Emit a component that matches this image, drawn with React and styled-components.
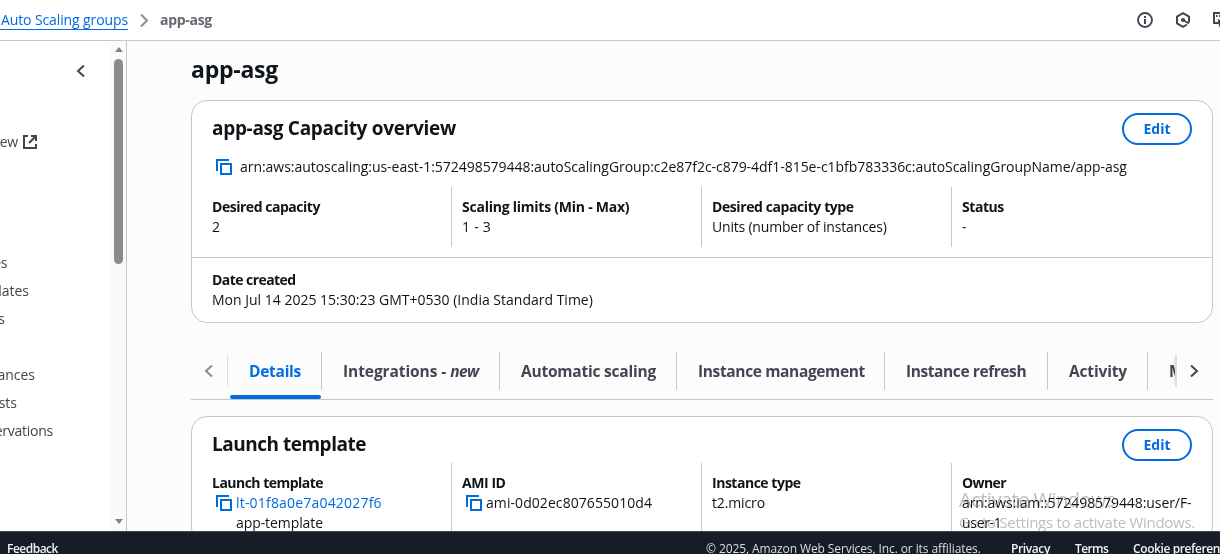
import React from "react";
import styled, { createGlobalStyle, css } from "styled-components";

const color = {
  text: "#0f141a",
  muted: "#424650",
  soft: "#656871",
  faint: "#8c8c94",
  line: "#c6c6cd",
  link: "#006ce0",
  page: "#fcfcfd",
  footer: "#161d26",
};

const GlobalStyle = createGlobalStyle`
  * { box-sizing: border-box; }
  body {
    margin: 0;
    overflow: hidden;
    background: ${color.page};
    color: ${color.text};
    font: 400 14px/20px "Open Sans", "Noto Sans", sans-serif;
    font-variant-ligatures: none;
  }
`;

const Text = styled.span`
  white-space: nowrap;
  letter-spacing: ${(p) => p.$track || 0}px;
`;

const Shell = styled.div`
  position: relative;
  display: flex;
  flex-direction: column;
  width: 1220px;
  height: 554px;
  overflow: hidden;
`;

/* ---------- top bar ---------- */
const TopBar = styled.header`
  flex: none;
  display: flex;
  align-items: center;
  height: 41px;
  background: #fff;
  border-bottom: 1px solid ${color.line};
  overflow: hidden;
`;
const CrumbLink = styled(Text)`
  display: block;
  width: 128px;
  height: 20px;
  padding-left: 1px;
  line-height: 19px;
  color: ${color.link};
  border-bottom: 1px solid ${color.link};
`;
const CrumbIcon = styled.div`
  display: flex;
  width: 32px;
  padding-left: 11px;
`;
const CrumbCurrent = styled(Text)`
  color: ${color.soft};
  font-weight: 700;
`;
const TopIcons = styled.div`
  display: flex;
  gap: 22px;
  margin-left: auto;
  margin-right: -9px;
  color: ${color.muted};
`;

/* ---------- sidebar ---------- */
const Body = styled.div`
  flex: 1;
  min-height: 0;
  display: flex;
`;
const Sidebar = styled.aside`
  flex: none;
  display: flex;
  width: 127px;
  background: #fff;
  border-right: 1px solid ${color.line};
`;
const SideContent = styled.nav`
  width: 111px;
  color: ${color.muted};
`;
const Collapse = styled.div`
  display: flex;
  justify-content: flex-end;
  padding: 23px 25px 0 0;
  height: 87px;
`;
const SideItem = styled.div`
  display: flex;
  justify-content: flex-end;
  width: ${(p) => p.$end}px;
  height: 28px;
  padding: 4px 0;
  white-space: nowrap;
`;
const ExternalRow = styled.div`
  display: flex;
  align-items: center;
  gap: 5px;
  height: 28px;
  margin-bottom: 93px;
`;
const SideGap = styled.div`
  height: 28px;
`;
const Scrollbar = styled.div`
  display: flex;
  flex-direction: column;
  align-items: center;
  width: 15px;
  padding: 6px 0 7px;
  background: #fafafa;
`;
const Arrow = styled.div`
  border: 4.5px solid transparent;
  border-top-width: ${(p) => (p.$up ? 0 : 5)}px;
  border-bottom-width: ${(p) => (p.$up ? 5 : 0)}px;
  border-${(p) => (p.$up ? "bottom" : "top")}-color: #858585;
  ${(p) => !p.$up && css`margin-top: auto;`}
`;
const Thumb = styled.div`
  width: 9px;
  height: 205px;
  margin-top: 7px;
  border-radius: 5px;
  background: #8b8b8b;
`;

/* ---------- main ---------- */
const Main = styled.main`
  flex: 1;
  min-width: 0;
  padding: 12px 7px 0 64px;
  overflow: hidden;
`;
const PageTitle = styled.h1`
  margin: 0 0 15px;
  font-size: 23px;
  line-height: 32px;
  font-weight: 700;
  letter-spacing: -0.25px;
`;
const Card = styled.section`
  background: #fff;
  border: 1px solid ${color.line};
  border-radius: 16px;
`;
const CardHead = styled.div`
  display: flex;
  justify-content: space-between;
  padding: 12px 20px 0;
`;
const CardTitle = styled.h2`
  margin: 0;
  padding-top: 3px;
  font-size: 19px;
  line-height: 24px;
  font-weight: 700;
  letter-spacing: ${(p) => p.$track}px;
`;
const Button = styled.button`
  width: 70px;
  height: 32px;
  padding: 0;
  border: 2px solid ${color.link};
  border-radius: 20px;
  background: #fff;
  color: ${color.link};
  font: 700 14px/20px "Open Sans", sans-serif;
`;
const CopyRow = styled.div`
  display: flex;
  align-items: center;
  gap: ${(p) => p.$gap || 4}px;
  padding-left: 4px;
  height: 20px;
`;
const ArnRow = styled.div`
  padding: 12px 20px 10px;
`;
const Columns = styled.div`
  display: grid;
  grid-template-columns: 249px 250px 250px 1fr;
  padding: 0 11px 0 10px;
  margin-top: ${(p) => p.$top || 0}px;
`;
const Column = styled.div`
  min-height: 60px;
  padding: 10px 0 10px 10px;
  & + & { border-left: 1px solid ${color.line}; }
`;
const Label = styled(Text)`
  display: block;
  font-weight: 700;
`;
const Value = styled(Text)`
  display: block;
  color: ${(p) => (p.$link ? color.link : "inherit")};
`;
const Indented = styled.div`
  padding-left: 24px;
`;
const CardFoot = styled.div`
  margin-top: 10px;
  padding: 12px 20px;
  border-top: 1px solid ${color.line};
`;

/* ---------- tabs ---------- */
const TabBar = styled.div`
  display: flex;
  height: 48px;
  margin: 29px 0 16px;
  border-bottom: 1px solid ${color.line};
`;
const ScrollLeft = styled.div`
  flex: none;
  display: flex;
  justify-content: center;
  align-items: center;
  width: 37px;
  height: 32px;
  margin-top: 3px;
  border-right: 1px solid #e0e0e5;
  color: ${color.faint};
`;
const ScrollRight = styled(ScrollLeft)`
  width: 38px;
  padding-right: 3px;
  border-right: 0;
  border-left: 2px solid #dcdce2;
  box-shadow: -3px 0 5px -3px rgba(15, 20, 26, 0.12);
  background: ${color.page};
  color: ${color.muted};
`;
const TabList = styled.div`
  flex: 1;
  min-width: 0;
  display: flex;
  overflow: hidden;
`;
const Tab = styled.div`
  flex: none;
  display: flex;
  flex-direction: column;
  width: ${(p) => p.$w}px;
  color: ${(p) => (p.$active ? color.link : color.muted)};
  &::after {
    content: "";
    display: ${(p) => (p.$active ? "block" : "none")};
    height: 4px;
    margin: 5px 1px 0 2px;
    border-radius: 2px;
    background: ${color.link};
  }
`;
const TabLabel = styled(Text)`
  height: 38px;
  padding: 8px 0 0 21px;
  border-right: 1px solid ${color.line};
  font-size: 15.5px;
  line-height: 22px;
  font-weight: 700;
`;
const Em = styled.em`
  letter-spacing: -0.6px;
`;

/* ---------- footer ---------- */
const Footer = styled.footer`
  flex: none;
  display: flex;
  align-items: flex-start;
  height: 23px;
  padding: 8px 0 0 7px;
  border-top: 1px solid ${color.muted};
  background: ${color.footer};
  color: #f3f3f7;
  font-size: 12px;
  line-height: 18px;
  font-weight: 600;
  overflow: hidden;
`;
const FooterItem = styled(Text)`
  flex: none;
  width: ${(p) => p.$w}px;
`;
const Copyright = styled(FooterItem)`
  margin-left: 648px;
  color: #dedee3;
  font-weight: 400;
`;

const Watermark = styled.div`
  position: absolute;
  left: 959px;
  top: 486px;
  height: 45px;
  overflow: hidden;
  color: #bdbdbd;
  mix-blend-mode: darken;
  pointer-events: none;
`;
const WatermarkTitle = styled(Text)`
  display: block;
  font-size: 20px;
  line-height: 28px;
`;
const WatermarkText = styled(Text)`
  display: block;
  font-size: 15px;
  line-height: 17px;
`;

const Chevron = ({ w = 8, h = 12, right, stroke = "currentColor" }) => (
  <svg width={w + 2} height={h + 2} viewBox={`-1 -1 ${w + 2} ${h + 2}`} fill="none" stroke={stroke} strokeWidth="2">
    <path d={right ? `M1 0.5L${w - 1} ${h / 2}L1 ${h - 0.5}` : `M${w - 1} 0.5L1 ${h / 2}L${w - 1} ${h - 0.5}`} />
  </svg>
);
const CopyIcon = () => (
  <svg width="16" height="16" viewBox="0 0 16 16" fill="none" stroke={color.link} strokeWidth="2">
    <path d="M1 12V1h12" />
    <path d="M5 5h10v10H5z" />
  </svg>
);
const ExternalIcon = () => (
  <svg width="14" height="14" viewBox="0 0 14 14" fill="none" stroke="currentColor" strokeWidth="2">
    <path d="M5 1H1v12h12V9" />
    <path d="M8 1h5v5M13 1L6 8" />
  </svg>
);
const InfoIcon = () => (
  <svg width="16" height="16" viewBox="0 0 16 16" fill="none" stroke="currentColor" strokeWidth="1.9">
    <circle cx="8" cy="8" r="7" />
    <path d="M8 7v5M8 4v2" strokeWidth="2" />
  </svg>
);
const HexIcon = () => (
  <svg width="16" height="16" viewBox="0 0 16 16" fill="none" stroke="currentColor" strokeWidth="2">
    <path d="M14 10.500V4.600L8 1.200L2 4.600v6.800l6 3.400l4-2.300" />
    <circle cx="8" cy="8" r="2.100" fill="currentColor" stroke="none" />
    <path d="M8 8l6 3.500" />
  </svg>
);
const CommandIcon = () => (
  <svg width="16" height="16" viewBox="0 0 16 16" fill="none" stroke="currentColor" strokeWidth="2">
    <path d="M6 11H1V1h14v7" />
    <path d="M3 4h1.500M6 4h1.500M9 4h1.500" />
    <path d="M4.500 7L12 10l-4 1.500l-1.500 4z" fill="currentColor" stroke="none" />
  </svg>
);

const tabs = [
  { label: "Details", w: 94, track: -0.27, active: true },
  { label: "Integrations - ", em: "new", w: 178, track: -0.08 },
  { label: "Automatic scaling", w: 177, track: -0.22 },
  { label: "Instance management", w: 208, track: -0.36 },
  { label: "Instance refresh", w: 163, track: -0.41 },
  { label: "Activity", w: 100, track: -0.15 },
  { label: "Monitoring", w: 120, track: -0.2 },
];

export default function App() {
  return (
    <Shell>
      <GlobalStyle />
      <TopBar>
        <CrumbLink $track={-0.11}>Auto Scaling groups</CrumbLink>
        <CrumbIcon><Chevron right w={8} h={13} stroke={color.faint} /></CrumbIcon>
        <CrumbCurrent $track={-0.29}>app-asg</CrumbCurrent>
        <TopIcons><InfoIcon /><HexIcon /><CommandIcon /></TopIcons>
      </TopBar>

      <Body>
        <Sidebar>
          <SideContent>
            <Collapse><Chevron w={8} h={12} /></Collapse>
            <ExternalRow>
              <SideItem $end={18}><Text $track={-0.2}>ew</Text></SideItem>
              <ExternalIcon />
            </ExternalRow>
            <SideItem $end={7}><Text $track={-0.4}>es</Text></SideItem>
            <SideItem $end={29}><Text>lates</Text></SideItem>
            <SideItem $end={5}><Text>s</Text></SideItem>
            <SideGap />
            <SideItem $end={35}><Text>ances</Text></SideItem>
            <SideItem $end={17}><Text>sts</Text></SideItem>
            <SideItem $end={53}><Text $track={-0.25}>ervations</Text></SideItem>
          </SideContent>
          <Scrollbar><Arrow $up /><Thumb /><Arrow /></Scrollbar>
        </Sidebar>

        <Main>
          <PageTitle>app-asg</PageTitle>

          <Card>
            <CardHead>
              <CardTitle $track={-0.3}>app-asg Capacity overview</CardTitle>
              <Button>Edit</Button>
            </CardHead>
            <ArnRow>
              <CopyRow $gap={8}>
                <CopyIcon />
                <Text $track={-0.035}>arn:aws:autoscaling:us-east-1:572498579448:autoScalingGroup:c2e87f2c-c879-4df1-815e-c1bfb783336c:autoScalingGroupName/app-asg</Text>
              </CopyRow>
            </ArnRow>
            <Columns>
              <Column>
                <Label $track={-0.47}>Desired capacity</Label>
                <Value>2</Value>
              </Column>
              <Column>
                <Label $track={-0.24}>Scaling limits (Min - Max)</Label>
                <Value $track={0.25}>1 - 3</Value>
              </Column>
              <Column>
                <Label $track={-0.41}>Desired capacity type</Label>
                <Value $track={-0.2}>Units (number of instances)</Value>
              </Column>
              <Column>
                <Label $track={-0.45}>Status</Label>
                <Value>-</Value>
              </Column>
            </Columns>
            <CardFoot>
              <Label $track={-0.56}>Date created</Label>
              <Value>Mon Jul 14 2025 15:30:23 GMT+0530 (India Standard Time)</Value>
            </CardFoot>
          </Card>

          <TabBar>
            <ScrollLeft><Chevron w={8} h={12} /></ScrollLeft>
            <TabList>
              {tabs.map((t) => (
                <Tab key={t.label} $w={t.w} $active={t.active}>
                  <TabLabel $track={t.track}>{t.label}{t.em && <Em>{t.em}</Em>}</TabLabel>
                </Tab>
              ))}
            </TabList>
            <ScrollRight><Chevron right w={8} h={12} /></ScrollRight>
          </TabBar>

          <Card>
            <CardHead>
              <CardTitle $track={-0.49}>Launch template</CardTitle>
              <Button>Edit</Button>
            </CardHead>
            <Columns $top={2}>
              <Column>
                <Label $track={-0.52}>Launch template</Label>
                <CopyRow><CopyIcon /><Value $link $track={0.19}>lt-01f8a0e7a042027f6</Value></CopyRow>
                <Indented><Value $track={-0.08}>app-template</Value></Indented>
              </Column>
              <Column>
                <Label $track={-0.43}>AMI ID</Label>
                <CopyRow><CopyIcon /><Value $track={0.07}>ami-0d02ec807655010d4</Value></CopyRow>
              </Column>
              <Column>
                <Label $track={-0.48}>Instance type</Label>
                <Value $track={-0.13}>t2.micro</Value>
              </Column>
              <Column>
                <Label $track={-0.6}>Owner</Label>
                <Value $track={-0.07}>arn:aws:iam::572498579448:user/F-</Value>
                <Value $track={-0.31}>user-1</Value>
              </Column>
            </Columns>
          </Card>
        </Main>
      </Body>

      <Footer>
        <FooterItem $w={51} $track={-0.5}>Feedback</FooterItem>
        <Copyright $w={305} $track={-0.1}>© 2025, Amazon Web Services, Inc. or its affiliates.</Copyright>
        <FooterItem $w={64} $track={-0.38}>Privacy</FooterItem>
        <FooterItem $w={58} $track={-0.6}>Terms</FooterItem>
        <FooterItem $w={120} $track={-0.4}>Cookie preferences</FooterItem>
      </Footer>

      <Watermark>
        <WatermarkTitle $track={-0.5}>Activate Windows</WatermarkTitle>
        <WatermarkText $track={-0.28}>Go to Settings to activate Windows.</WatermarkText>
      </Watermark>
    </Shell>
  );
}
